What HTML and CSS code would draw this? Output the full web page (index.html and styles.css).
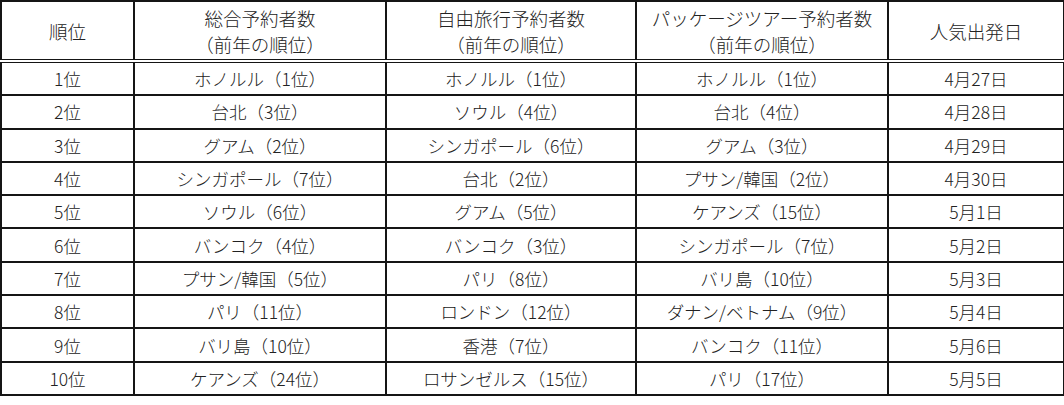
FILE: index.html
```html
<!DOCTYPE html>
<html lang="ja">
<head>
<meta charset="utf-8">
<link rel="stylesheet" href="styles.css">
</head>
<body>
<table class="rank">
  <colgroup>
    <col class="c1"><col class="c2"><col class="c3"><col class="c4"><col class="c5">
  </colgroup>
  <thead>
    <tr>
      <th>順位</th>
      <th>総合予約者数<br>（前年の順位）</th>
      <th>自由旅行予約者数<br>（前年の順位）</th>
      <th>パッケージツアー予約者数<br>（前年の順位）</th>
      <th>人気出発日</th>
    </tr>
  </thead>
  <tbody>
    <tr><td>1位</td><td>ホノルル（1位）</td><td>ホノルル（1位）</td><td>ホノルル（1位）</td><td>4月27日</td></tr>
    <tr><td>2位</td><td>台北（3位）</td><td>ソウル（4位）</td><td>台北（4位）</td><td>4月28日</td></tr>
    <tr><td>3位</td><td>グアム（2位）</td><td>シンガポール（6位）</td><td>グアム（3位）</td><td>4月29日</td></tr>
    <tr><td>4位</td><td>シンガポール（7位）</td><td>台北（2位）</td><td>プサン/韓国（2位）</td><td>4月30日</td></tr>
    <tr><td>5位</td><td>ソウル（6位）</td><td>グアム（5位）</td><td>ケアンズ（15位）</td><td>5月1日</td></tr>
    <tr><td>6位</td><td>バンコク（4位）</td><td>バンコク（3位）</td><td>シンガポール（7位）</td><td>5月2日</td></tr>
    <tr><td>7位</td><td>プサン/韓国（5位）</td><td>パリ（8位）</td><td>バリ島（10位）</td><td>5月3日</td></tr>
    <tr><td>8位</td><td>パリ（11位）</td><td>ロンドン（12位）</td><td>ダナン/ベトナム（9位）</td><td>5月4日</td></tr>
    <tr><td>9位</td><td>バリ島（10位）</td><td>香港（7位）</td><td>バンコク（11位）</td><td>5月6日</td></tr>
    <tr><td>10位</td><td>ケアンズ（24位）</td><td>ロサンゼルス（15位）</td><td>パリ（17位）</td><td>5月5日</td></tr>
  </tbody>
</table>
</body>
</html>
```

FILE: styles.css
```css
html, body {
  margin: 0;
  padding: 0;
  background: #ffffff;
}

.rank {
  border-collapse: collapse;
  table-layout: fixed;
  width: 1063px;
  font-family: "Noto Sans CJK JP", "Noto Sans", sans-serif;
  font-weight: 300;
  font-size: 17.5px;
  color: #222222;
}

.c1 { width: 133px; }
.c2 { width: 252px; }
.c3 { width: 250px; }
.c4 { width: 252px; }
.c5 { width: 176px; }

.rank th,
.rank td {
  border: 2px solid #151515;
  padding: 0;
  text-align: center;
  vertical-align: middle;
  white-space: nowrap;
}

.rank th {
  font-weight: 300;
  font-size: 18.5px;
  height: 57px;
  line-height: 26px;
  border-bottom: 4px double #151515;
}

.rank td {
  height: 31.3px;
  line-height: 31px;
}
```
